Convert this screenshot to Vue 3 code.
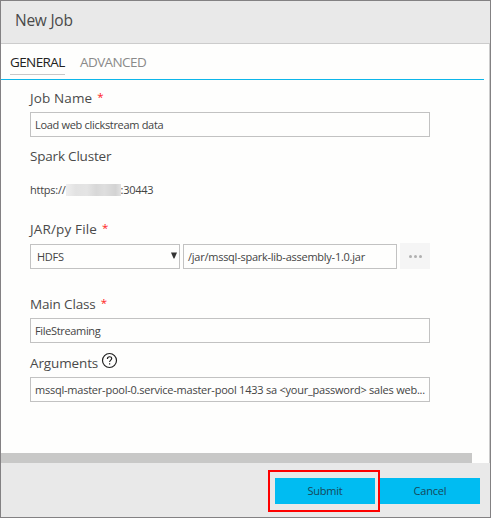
<script setup>
import { ref } from 'vue'

const jobName = ref('Load web clickstream data')
const jarPath = ref('/jar/mssql-spark-lib-assembly-1.0.jar')
const mainClass = ref('FileStreaming')
const args = ref('mssql-master-pool-0.service-master-pool 1433 sa <your_password> sales web...')
</script>

<template>
  <div class="dialog">
    <header class="header"><h1>New Job</h1></header>

    <main class="body">
      <nav class="tabs">
        <span class="tab active">GENERAL</span>
        <span class="tab advanced">ADVANCED</span>
      </nav>

      <div class="form">
        <div class="label job">Job Name<span class="star">*</span></div>
        <div class="input name">{{ jobName }}</div>

        <div class="label cluster">Spark Cluster</div>
        <div class="url"><span>https://</span><span class="masked"></span><span class="port">:30443</span></div>

        <div class="label jar">JAR/py File<span class="star">*</span></div>
        <div class="file-row">
          <div class="input select">
            <span>HDFS</span>
            <svg width="6" height="7" viewBox="0 0 6 7"><path d="M0 0.5H6L3.4 6.5H2.6Z" fill="#333" /></svg>
          </div>
          <div class="input path">{{ jarPath }}</div>
          <div class="more">
            <svg width="13" height="3" viewBox="0 0 13 3" fill="#b0b0b0">
              <circle cx="1.5" cy="1.5" r="1.5" /><circle cx="6.5" cy="1.5" r="1.5" /><circle cx="11.5" cy="1.5" r="1.5" />
            </svg>
          </div>
        </div>

        <div class="label main">Main Class<span class="star">*</span></div>
        <div class="input class-name">{{ mainClass }}</div>

        <div class="label arguments">
          <span>Arguments</span>
          <svg class="help" width="17" height="17" viewBox="0 0 17 17" fill="none" stroke="#1e1e1e">
            <circle cx="8.5" cy="8.5" r="7" stroke-width="1.15" />
            <path d="M6.4 6.9C6.4 5.5 7.3 4.7 8.6 4.7C9.9 4.7 10.7 5.5 10.7 6.6C10.7 8.2 8.6 8.2 8.6 10.1" stroke-width="1.15" />
            <path d="M8.6 11.2V12.5" stroke-width="1.2" />
          </svg>
        </div>
        <div class="input args">{{ args }}</div>
      </div>

      <div class="scrollbar"></div>
    </main>

    <footer class="footer">
      <div class="button submit">Submit<div class="highlight"></div></div>
      <div class="button cancel">Cancel</div>
    </footer>
  </div>
</template>

<style>
body { margin: 0; background: #fff; }
</style>

<style scoped>
* { box-sizing: border-box; }
.dialog {
  display: flex;
  flex-direction: column;
  width: 491px;
  height: 518px;
  border: 1px solid #838183;
  background: #e9e9e9;
  color: #4a4a4a;
  font-family: "Open Sans", "Noto Sans", sans-serif;
  font-size: 11px;
  white-space: nowrap;
  overflow: hidden;
}
.header {
  height: 43px;
  flex: none;
  padding: 9px 0 0 14px;
  border-bottom: 1px solid #ccc;
}
h1 {
  margin: 0;
  font-size: 15.5px;
  line-height: 21px;
  font-weight: 400;
  letter-spacing: -0.25px;
}
.body {
  display: flex;
  flex-direction: column;
  height: 419px;
  flex: none;
  border-right: 1px solid #ccc;
  background: #fefefd;
}
.tabs {
  display: flex;
  gap: 15px;
  height: 36px;
  flex: none;
  margin-right: 5px;
  padding: 8px 0 0 9px;
  border-bottom: 1px solid #0cb6ea;
  font-size: 13.5px;
  line-height: 20px;
}
.tab { width: 55px; height: 23px; color: #8a8a8a; letter-spacing: -0.6px; }
.tab.active { color: #222; border-bottom: 1px solid #c8c8c8; }
.form { flex: 1; width: 429px; padding: 8px 0 0 29px; }
.label { display: flex; height: 20px; font-size: 13.5px; line-height: 20px; }
.job { letter-spacing: 0.12px; }
.cluster { margin-top: 9px; letter-spacing: -0.2px; }
.jar { margin-top: 19px; letter-spacing: 0.15px; }
.main { margin-top: 25px; letter-spacing: -0.15px; }
.arguments { margin-top: 10px; letter-spacing: -0.12px; }
.star { margin-left: 5px; color: #f22; font-size: 11.5px; line-height: 18px; }
.help { margin: -1px 0 0 3px; }
.input {
  width: 400px;
  height: 25px;
  margin-top: 4px;
  padding-left: 4px;
  border: 1px solid #c2c2c2;
  line-height: 23px;
  color: #444;
}
.name { letter-spacing: -0.31px; }
.class-name { letter-spacing: -0.34px; }
.args { letter-spacing: -0.23px; }
.url { display: flex; height: 20px; margin-top: 14px; line-height: 20px; letter-spacing: -0.25px; color: #444; }
.masked {
  width: 55px;
  height: 12px;
  margin-top: 4px;
  background: linear-gradient(90deg, #eee, #e2e2e2 18%, #e4e4e4 38%, #d8d8d8 55%, #dedede 70%, #d3d3d3 90%, #e2e2e2);
  filter: blur(0.7px);
}
.file-row { display: flex; margin-top: 4px; padding-top: 1px; }
.file-row .input { margin-top: 0; }
.input.select {
  display: flex;
  width: 150px;
  align-items: center;
  justify-content: space-between;
  padding: 0 2px 0 6px;
  letter-spacing: -0.25px;
}
.select svg { margin-top: -2px; }
.input.path { width: 214px; margin-left: 3px; letter-spacing: -0.25px; }
.more {
  display: flex;
  align-items: center;
  justify-content: center;
  width: 30px;
  height: 26px;
  margin: -1px 0 0 3px;
  background: #f5f5f5;
}
.scrollbar { width: 471px; height: 10px; flex: none; background: #c8c8c7; }
.footer { display: flex; gap: 5px; padding: 15px 0 0 274px; }
.button {
  position: relative;
  width: 100px;
  height: 26px;
  background: #00bcf2;
  color: #17485a;
  line-height: 26px;
  text-align: center;
  letter-spacing: -0.2px;
}
.submit { z-index: 1; }
.highlight {
  position: absolute;
  inset: -8px -5px -8px -7px;
  border: 2px solid #fe0000;
}
</style>
